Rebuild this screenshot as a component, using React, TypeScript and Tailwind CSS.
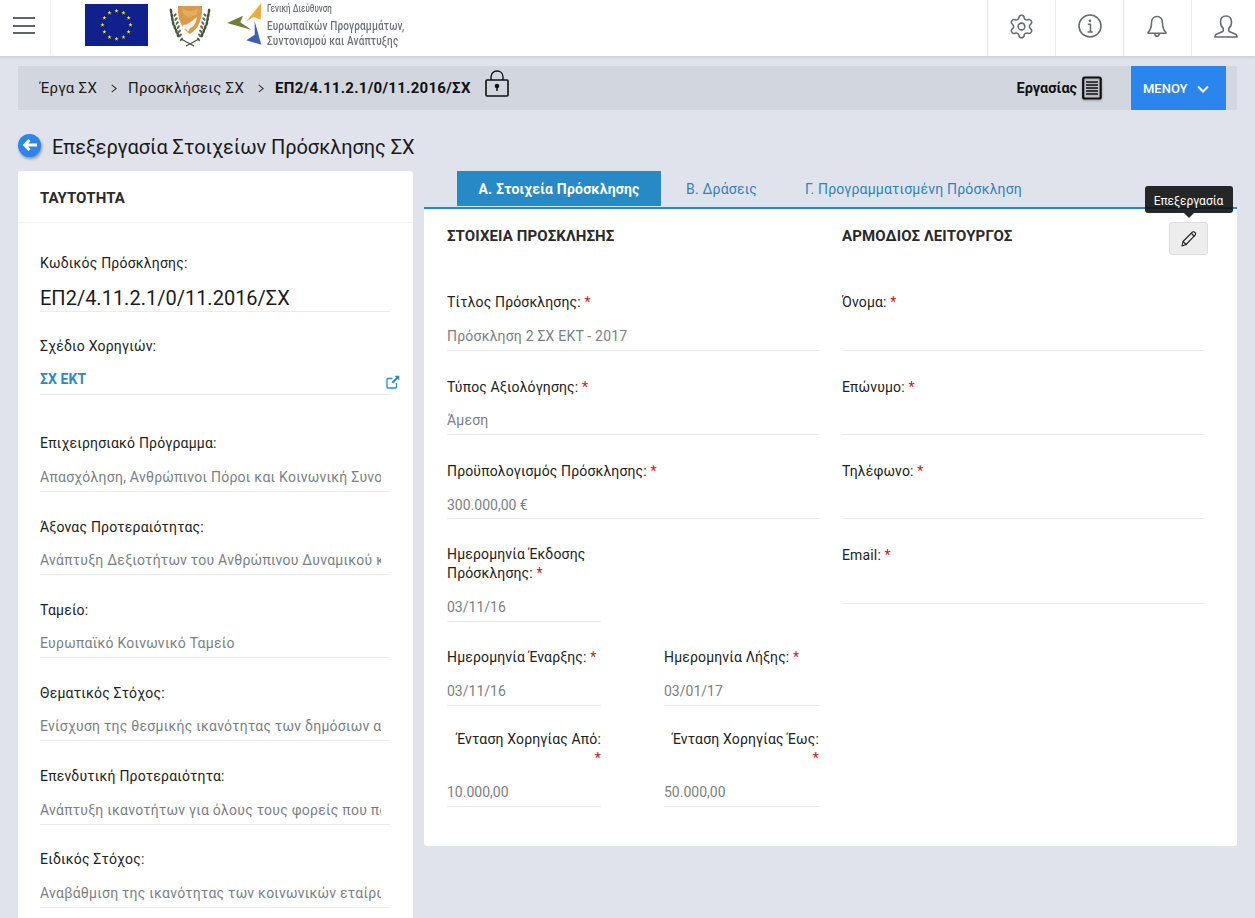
import React from "react";
import { Settings } from "lucide-react";

const font = { fontFamily: "Roboto, 'Noto Sans', sans-serif" };

function Stars() {
  const pts = Array.from({ length: 12 }, (_, i) => {
    const a = (i * Math.PI) / 6;
    return [31.5 + 14 * Math.sin(a), 21 - 14 * Math.cos(a)];
  });
  return (
    <svg width="63" height="42" viewBox="0 0 63 42" className="block">
      <rect width="63" height="42" fill="#10208c" />
      {pts.map(([x, y], i) => (
        <polygon
          key={i}
          fill="#f5e51b"
          transform={`translate(${x} ${y}) scale(2.2)`}
          points="0,-1 0.29,-0.31 0.95,-0.31 0.36,0.12 0.59,0.81 0,0.38 -0.59,0.81 -0.36,0.12 -0.95,-0.31 -0.29,-0.31"
        />
      ))}
    </svg>
  );
}

function Emblem() {
  const leaves = [0, 1, 2, 3, 4, 5, 6];
  return (
    <svg width="42" height="42" viewBox="0 0 42 42" className="block">
      <path d="M9 1 H33 C34 12 30 24 21 29 C12 24 8 12 9 1 Z" fill="#d99a4a" />
      <path d="M13 3 C16 7 26 7 29 3 C29 5 28 8 27 10 L20 12 L15 10 C14 8 13 5 13 3Z" fill="#e5ac5e" />
      <path d="M14 20 C18 20 22 17 28 12 C27 18 25 22 21 23 L19 27 L17 24 L13 25 Z" fill="#f4f1ea" />
      {leaves.map((i) => (
        <g key={i}>
          <ellipse cx={2 + i * 0.7 + (i > 3 ? i - 3 : 0) * 0.9} cy={6 + i * 4} rx="1.3" ry="2.6" fill="#47513a" transform={`rotate(-10 ${3 + i} ${6 + i * 4})`} />
          <ellipse cx={40 - i * 0.7 - (i > 3 ? i - 3 : 0) * 0.9} cy={6 + i * 4} rx="1.3" ry="2.6" fill="#47513a" transform={`rotate(10 ${39 - i} ${6 + i * 4})`} />
          <ellipse cx={6 + i * 1.1} cy={10 + i * 4} rx="1.1" ry="2.1" fill="#5f6a4d" transform={`rotate(40 ${6 + i} ${10 + i * 4})`} />
          <ellipse cx={36 - i * 1.1} cy={10 + i * 4} rx="1.1" ry="2.1" fill="#5f6a4d" transform={`rotate(-40 ${36 - i} ${10 + i * 4})`} />
        </g>
      ))}
      <path d="M12 34 L25 41 M30 34 L17 41" stroke="#47513a" strokeWidth="1.2" />
    </svg>
  );
}

function Arrows() {
  return (
    <svg width="38" height="44" viewBox="0 0 38 44" className="block">
      <polygon points="34.3,0 19.3,18.3 26.7,14 33.7,16.7" fill="#f2a93b" />
      <polygon points="0,20 16,12.7 13.3,19.3 24.3,26.7" fill="#6f7f34" />
      <polygon points="27.7,18.3 34.3,41.7 19.3,37.3 27.7,31.7" fill="#3f62ae" />
    </svg>
  );
}

function IconCell({ children }: { children: React.ReactNode }) {
  return <div className="w-[68px] h-[56px] pb-[4px] shrink-0 flex items-center justify-center border-l border-[#e9eaec]">{children}</div>;
}

const iconCls = "#666b70";

function Header() {
  return (
    <div className="h-[57px] bg-white border-b border-[#cfd2d8] shadow-[0_1px_2px_rgba(0,0,0,0.08)] flex items-stretch">
      <div className="w-[51px] h-[55px] pb-[4px] border-r border-[#eeeff1] flex flex-col justify-center gap-[5.5px] pl-[13px]">
        <div className="w-[22px] h-[2px] bg-[#5f656b]" />
        <div className="w-[22px] h-[2px] bg-[#5f656b]" />
        <div className="w-[22px] h-[2px] bg-[#5f656b]" />
      </div>
      <div className="ml-[34px] mt-[4px] h-[42px]">
        <Stars />
      </div>
      <div className="ml-[21px] mt-[5px]">
        <Emblem />
      </div>
      <div className="ml-[16px] mt-[3px]">
        <Arrows />
      </div>
      <div className="ml-[2px] mt-[2px] flex flex-col origin-left scale-x-[0.8] text-[#6f7378] font-medium whitespace-nowrap">
        <span className="text-[10px] leading-[14px] mb-[2px]">Γενική Διεύθυνση</span>
        <span className="text-[12.500px] leading-[15px] tracking-[0.2px]">Ευρωπαϊκών Προγραμμάτων,</span>
        <span className="text-[12.500px] leading-[15px] tracking-[0.2px]">Συντονισμού και Ανάπτυξης</span>
      </div>
      <div className="ml-auto flex -mr-[4px]">
        <IconCell>
          <Settings size={27} color={iconCls} strokeWidth={1.35} />
        </IconCell>
        <IconCell>
          <svg width="24" height="24" viewBox="0 0 24 24" fill="none" stroke={iconCls}>
            <circle cx="12" cy="12" r="11" strokeWidth="1.600" />
            <circle cx="12" cy="6.800" r="1.400" fill={iconCls} stroke="none" />
            <path d="M9.800 10.200h2.700v7.600M9.500 18h5.200" strokeWidth="1.600" />
          </svg>
        </IconCell>
        <IconCell>
          <svg width="20" height="23" viewBox="0 0 22 25" fill="none" stroke={iconCls} strokeWidth="1.700" strokeLinejoin="round" className="-ml-[2px]">
            <path d="M11 1.500c-3.800 0-6 2.900-6 6.500 0 5-1 8-3.600 10.600-.6.700-.2 1.400.5 1.400h18.200c.7 0 1.100-.7.500-1.400C18 16 17 13 17 8c0-3.600-2.200-6.500-6-6.500z" />
            <path d="M8.500 20.500c.3 1.700 1.200 2.700 2.500 2.700s2.200-1 2.500-2.700" />
          </svg>
        </IconCell>
        <IconCell>
          <svg width="24" height="23" viewBox="0 0 26 25" fill="none" stroke={iconCls} strokeWidth="1.700" strokeLinejoin="round">
            <path d="M13 1c-3.800 0-6 2.700-6 6.500 0 3 1.200 5.500 3 7v2.300c0 .7-.4 1.200-1.100 1.500L2.500 21c-1 .5-1.500 1.200-1.500 3h24c0-1.800-.5-2.500-1.500-3l-6.400-2.700c-.7-.3-1.100-.8-1.100-1.500v-2.300c1.800-1.500 3-4 3-7C19 3.700 16.800 1 13 1z" />
          </svg>
        </IconCell>
      </div>
    </div>
  );
}

function Breadcrumb() {
  return (
    <div className="mx-[18px] mt-[9px] h-[44px] bg-[#d2d6de] flex items-center pr-[11px] text-[15px] tracking-[0.25px] [&>span]:mt-[1px]">
      <span className="ml-[22px] text-[#1c1c1c]">Έργα ΣΧ</span>
      <Chev />
      <span className="text-[#1c1c1c]">Προσκλήσεις ΣΧ</span>
      <Chev />
      <span className="font-bold text-[#111] tracking-[0.28px]">ΕΠ2/4.11.2.1/0/11.2016/ΣΧ</span>
      <svg width="24" height="28" viewBox="0 0 24 28" fill="none" stroke="#111" strokeWidth="1.400" className="ml-[14px] -mt-[9px]">
        <rect x="1" y="10" width="22" height="16" rx="1" strokeWidth="1.600" />
        <path d="M6 10V7c0-3.600 2.500-6 6-6s6 2.400 6 6v3" />
        <circle cx="12" cy="16" r="1.600" fill="#111" />
        <path d="M12 17v4" strokeWidth="1.500" />
      </svg>
      <span className="ml-auto font-bold text-[#111] text-[14.500px] tracking-normal">Εργασίας</span>
      <svg width="20" height="24" viewBox="0 0 20 24" className="ml-[5px] mr-[29px] drop-shadow-[0_1px_1px_rgba(0,0,0,0.3)]">
        <rect x="1.200" y="1.500" width="17.500" height="21" rx="1.500" fill="none" stroke="#111" strokeWidth="2.200" />
        <path d="M4 6h12M4 9h12M4 12h12M4 15h12M4 18h12" stroke="#111" strokeWidth="1.700" />
      </svg>
      <div className="w-[95px] h-[44px] pt-[1px] bg-[#2a85ec] text-white text-[13px] tracking-normal font-medium flex items-center pl-[12px] gap-[9px]">
        ΜΕΝΟΥ
        <svg width="12" height="8" viewBox="0 0 12 8" fill="none" stroke="#fff" strokeWidth="2">
          <path d="M1 1.500l5 5 5-5" />
        </svg>
      </div>
    </div>
  );
}

function Chev() {
  return (
    <svg width="6" height="9" viewBox="0 0 6 9" fill="none" stroke="#333" strokeWidth="1.100" className="ml-[14px] mr-[11px]">
      <path d="M.7 .8l4.500 3.700L.7 8.200" />
    </svg>
  );
}

function Req() {
  return <span className="text-[#d01818]"> *</span>;
}

function Field({ label, value, req, big, link, clip, cls }: { label: React.ReactNode; value?: string; req?: boolean; big?: boolean; link?: boolean; clip?: boolean; cls?: string }) {
  const numeric = value ? /^\d/.test(value) : false;
  const left = big || link || clip;
  return (
    <div className={cls}>
      <div className={`mt-[0.4px] text-[14px] leading-[19px] text-[#222] ${left ? "tracking-[0.2px]" : "tracking-[0.15px]"}`}>
        {label}
        {req && <Req />}
      </div>
      <div className={`mt-[9.6px] h-[29px] border-b border-[#ebecee] whitespace-nowrap flex items-center ${big ? "text-[20px] text-[#1b1b1b] tracking-normal pt-[2px]" : link ? "text-[14px] font-bold text-[#2c8ac6] tracking-[0.1px]" : numeric ? "text-[14px] tracking-normal pt-[1.6px] text-[#7b7f84]" : clip ? "text-[14px] tracking-[0.25px] pt-[1px] text-[#7b7f84]" : "text-[14px] tracking-[0.2px] pt-[1.6px] text-[#7b7f84]"}`}>
        <span className={clip ? "block w-[341px] overflow-hidden" : ""}>{value}</span>
      </div>
    </div>
  );
}

function LeftCard() {
  const rows = [
    ["Επιχειρησιακό Πρόγραμμα:", "Απασχόληση, Ανθρώπινοι Πόροι και Κοινωνική Συνοχή"],
    ["Άξονας Προτεραιότητας:", "Ανάπτυξη Δεξιοτήτων του Ανθρώπινου Δυναμικού και"],
    ["Ταμείο:", "Ευρωπαϊκό Κοινωνικό Ταμείο"],
    ["Θεματικός Στόχος:", "Ενίσχυση της θεσμικής ικανότητας των δημόσιων αρχών"],
    ["Επενδυτική Προτεραιότητα:", "Ανάπτυξη ικανοτήτων για όλους τους φορείς που παρέχουν"],
    ["Ειδικός Στόχος:", "Αναβάθμιση της ικανότητας των κοινωνικών εταίρων και"],
  ];
  return (
    <div className="w-[395px] shrink-0 bg-white rounded-[3px] h-[800px]">
      <div className="h-[52px] px-[22px] pt-[17px] border-b border-[#f3f4f5] text-[15px] leading-[20px] font-bold text-[#2a2a2a]">ΤΑΥΤΟΤΗΤΑ</div>
      <div className="pl-[22px] pt-[31px] pr-[23px] flex flex-col">
        <Field label="Κωδικός Πρόσκλησης:" value="ΕΠ2/4.11.2.1/0/11.2016/ΣΧ" big />
        <div className="relative mt-[25px]">
          <Field label="Σχέδιο Χορηγιών:" value="ΣΧ ΕΚΤ" link />
          <svg width="14" height="14" viewBox="0 0 14 14" fill="none" stroke="#2c8ac6" strokeWidth="1.300" className="absolute right-[-10px] top-[38px]">
            <path d="M10.500 8v4a1 1 0 01-1 1H2a1 1 0 01-1-1V4.500a1 1 0 011-1h4.500" />
            <path d="M13.300.8H8.500l1.700 1.700L5.600 7l1.500 1.500 4.600-4.600 1.600 1.600z" fill="#2c8ac6" stroke="none" />
          </svg>
        </div>
        <div className="mt-[39px] flex flex-col gap-[25.200px]">
          {rows.map(([l, v]) => (
            <Field key={l} label={l} value={v} clip />
          ))}
        </div>
      </div>
    </div>
  );
}

function RightPanel() {
  return (
    <div className="flex-1 ml-[11px]">
      <div className="h-[36px] pl-[33px] flex text-[14px] tracking-[0.2px]">
        <div className="w-[204px] h-[35px] bg-[#2789c6] text-white font-bold flex items-center justify-center pt-[1px]">Α. Στοιχεία Πρόσκλησης</div>
        <div className="ml-[25px] h-[35px] pt-[1px] flex items-center text-[#2c84bf]">Β. Δράσεις</div>
        <div className="ml-[48px] h-[35px] pt-[1px] flex items-center text-[#2c84bf]">Γ. Προγραμματισμένη Πρόσκληση</div>
      </div>
      <div className="h-[639px] bg-white border-t-[2px] border-[#2789c6] rounded-b-[3px] relative">
        <div className="h-[53px] flex text-[15px] tracking-[0.12px] font-bold text-[#2a2a2a] pt-[17px] leading-[20px]">
          <span className="ml-[23px] w-[395px]">ΣΤΟΙΧΕΙΑ ΠΡΟΣΚΛΗΣΗΣ</span>
          <span>ΑΡΜΟΔΙΟΣ ΛΕΙΤΟΥΡΓΟΣ</span>
        </div>
        <div className="absolute right-[29px] top-[13px] w-[39px] h-[33px] bg-[#ededed] border border-[#dcdcdc] rounded-[3px] flex items-center justify-center">
          <svg width="16" height="16" viewBox="0 0 16 16" fill="none" stroke="#222" strokeWidth="1.100" strokeLinejoin="round">
            <path d="M1 15l1-4.500L11.500 1c.6-.4 1.200-.4 1.800 0l1 1c.4.600.4 1.200 0 1.800L5 13.500z" />
            <path d="M2 10.500L5.500 14M10.500 2.500l3 3" />
          </svg>
          <div className="absolute left-1/2 -translate-x-1/2 -top-[37px] h-[27px] w-[88px] pt-[2px] rounded-[3px] bg-[#111111e6] text-white text-[12px] flex items-center justify-center">
            Επεξεργασία
            <div className="absolute -bottom-[5px] left-1/2 -ml-[5px] w-0 h-0 border-x-[5px] border-x-transparent border-t-[5px] border-t-[#111111e6]" />
          </div>
        </div>
        <div className="flex pt-[31px] pl-[23px]">
          <div className="w-[372px] flex flex-col gap-[26.200px]">
            <Field label="Τίτλος Πρόσκλησης:" value="Πρόσκληση 2 ΣΧ ΕΚΤ - 2017" req />
            <Field label="Τύπος Αξιολόγησης:" value="Άμεση" req />
            <Field label="Προϋπολογισμός Πρόσκλησης:" value="300.000,00 €" req />
            <Field cls="w-[154px] -mt-[1px]" label="Ημερομηνία Έκδοσης Πρόσκλησης:" value="03/11/16" req />
            <div className="flex justify-between">
              <Field cls="w-[154px]" label="Ημερομηνία Έναρξης:" value="03/11/16" req />
              <Field cls="w-[155px]" label="Ημερομηνία Λήξης:" value="03/01/17" req />
            </div>
            <div className="flex justify-between -mt-[2px]">
              <Field cls="w-[154px] [&>div:first-child]:text-right" label={<>Ένταση Χορηγίας Από:<br /></>} value="10.000,00" req />
              <Field cls="w-[155px] [&>div:first-child]:text-right" label={<>Ένταση Χορηγίας Έως:<br /></>} value="50.000,00" req />
            </div>
          </div>
          <div className="w-[362px] ml-[23px] flex flex-col gap-[26.200px]">
            <Field label="Όνομα:" req />
            <Field label="Επώνυμο:" req />
            <Field label="Τηλέφωνο:" req />
            <Field label="Email:" req />
          </div>
        </div>
      </div>
    </div>
  );
}

export default function App() {
  return (
    <div style={font} className="h-[918px] w-[1255px] overflow-hidden bg-[#e0e3ec]">
      <Header />
      <Breadcrumb />
      <div className="ml-[18px] mt-[24px] h-[26px] flex items-center">
        <div className="-mt-[4px] w-[23px] h-[23px] rounded-full bg-[#2a85ec] shadow-[1px_2px_3px_rgba(0,0,0,0.35)] flex items-center justify-center">
          <svg width="14" height="12" viewBox="0 0 14 12" fill="none" stroke="#fff" strokeWidth="2.800">
            <path d="M6.500 1L1.800 6l4.700 5M2 6h12" />
          </svg>
        </div>
        <span className="ml-[11px] text-[20px] tracking-[-0.05px] text-[#1a1a1a]">Επεξεργασία Στοιχείων Πρόσκλησης ΣΧ</span>
      </div>
      <div className="mx-[18px] mt-[11px] flex">
        <LeftCard />
        <RightPanel />
      </div>
    </div>
  );
}
